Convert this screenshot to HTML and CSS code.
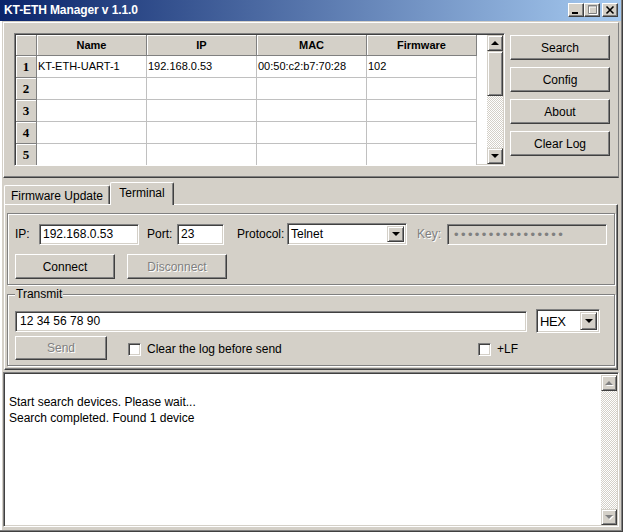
FILE: index.html
```html
<!DOCTYPE html>
<html>
<head>
<meta charset="utf-8">
<title>KT-ETH Manager v 1.1.0</title>
<link rel="stylesheet" href="styles.css">
</head>
<body>
<div class="window">
  <div class="titlebar">
    <span class="title">KT-ETH Manager v 1.1.0</span>
    <div class="caps">
      <div class="cap"><svg width="14" height="12" viewBox="0 0 14 12"><rect x="3" y="8" width="6" height="2" fill="#000"/></svg></div>
      <div class="cap"><svg width="14" height="12" viewBox="0 0 14 12"><path d="M3.5 1.5h8v8h-8z M3 2h9" fill="none" stroke="#fff" stroke-width="1" transform="translate(1 1)"/><path d="M3.5 1.5h8v8h-8z M3 2h9" fill="none" stroke="#808080" stroke-width="1"/></svg></div>
      <div class="cap close"><svg width="14" height="12" viewBox="0 0 14 12"><path d="M3.5 2.5l7 7M10.5 2.5l-7 7" stroke="#000" stroke-width="1.6"/></svg></div>
    </div>
  </div>
  <div class="client">
    <div class="top-panel">
      <div class="grid">
        <div class="cells">
          <div class="hcell"></div>
          <div class="hcell">Name</div>
          <div class="hcell">IP</div>
          <div class="hcell">MAC</div>
          <div class="hcell">Firmware</div>

          <div class="rcell">1</div>
          <div class="cell">KT-ETH-UART-1</div>
          <div class="cell">192.168.0.53</div>
          <div class="cell">00:50:c2:b7:70:28</div>
          <div class="cell">102</div>

          <div class="rcell">2</div>
          <div class="cell"></div><div class="cell"></div><div class="cell"></div><div class="cell"></div>
          <div class="rcell">3</div>
          <div class="cell"></div><div class="cell"></div><div class="cell"></div><div class="cell"></div>
          <div class="rcell">4</div>
          <div class="cell"></div><div class="cell"></div><div class="cell"></div><div class="cell"></div>
          <div class="rcell">5</div>
          <div class="cell"></div><div class="cell"></div><div class="cell"></div><div class="cell"></div>
        </div>
        <div class="filler"></div>
        <div class="vscroll">
          <div class="sbtn"><span class="arrow up"></span></div>
          <div class="thumb"></div>
          <div class="track"></div>
          <div class="sbtn"><span class="arrow down"></span></div>
        </div>
      </div>
      <div class="side-btns">
        <button class="btn side">Search</button>
        <button class="btn side">Config</button>
        <button class="btn side">About</button>
        <button class="btn side">Clear Log</button>
      </div>
    </div>

    <div class="tabs-area">
      <div class="tabstrip">
        <div class="tab fw">Firmware Update</div>
        <div class="tab active">Terminal</div>
      </div>
      <div class="tabpanel">
        <div class="group conn">
          <div class="row r1">
            <span class="lbl w-ip">IP:</span>
            <div class="field w-ipin">192.168.0.53</div>
            <span class="lbl w-port">Port:</span>
            <div class="field w-portin">23</div>
            <span class="lbl w-proto">Protocol:</span>
            <div class="select w-protosel"><span class="sel-text">Telnet</span><span class="drop"><span class="arrow down"></span></span></div>
            <span class="lbl w-key disabled">Key:</span>
            <div class="field w-keyin off"><span class="dots">••••••••••••••••</span></div>
          </div>
          <div class="row r2">
            <button class="btn wide">Connect</button>
            <button class="btn wide disabled gap13">Disconnect</button>
          </div>
        </div>
        <div class="group transmit">
          <span class="legend">Transmit</span>
          <div class="row t1">
            <div class="field w-tx">12 34 56 78 90</div>
            <div class="select w-hex"><span class="sel-text hex">HEX</span><span class="drop"><span class="arrow down"></span></span></div>
          </div>
          <div class="row t2">
            <button class="btn send disabled">Send</button>
            <div class="chk-wrap"><span class="chk"></span><span class="chk-lbl">Clear the log before send</span></div>
            <div class="chk-wrap2"><span class="chk"></span><span class="chk-lbl">+LF</span></div>
          </div>
        </div>
      </div>
    </div>

    <div class="log">
      <div class="log-text">
        <div class="line">&nbsp;</div>
        <div class="line">Start search devices. Please wait...</div>
        <div class="line">Search completed. Found 1 device</div>
      </div>
      <div class="vscroll logscroll">
        <div class="sbtn"><span class="arrow up dis"></span></div>
        <div class="track"></div>
        <div class="sbtn"><span class="arrow down dis"></span></div>
      </div>
    </div>
  </div>
</div>
</body>
</html>
```

FILE: styles.css
```css
* { box-sizing: border-box; }
html, body { margin: 0; padding: 0; }
body {
  font-family: "Liberation Sans", Arial, sans-serif;
  font-size: 12px;
  color: #000;
  background: #d4d0c8;
}
.window {
  width: 623px;
  height: 532px;
  background: #d4d0c8;
  display: flex;
  flex-direction: column;
  overflow: hidden;
  box-shadow: inset -1px -1px #404040, inset -2px -2px #808080, inset 2px 0 #fff;
}

/* Title bar */
.titlebar {
  height: 21px;
  margin-right: 2px;
  background: linear-gradient(to right, #0a246a, #a6caf0);
  display: flex;
  align-items: center;
  justify-content: space-between;
  padding: 0 3px 1px 4px;
  flex: none;
}
.title { color: #fff; font-weight: bold; font-size: 12px; letter-spacing: -0.1px; }
.caps { display: flex; }
.cap {
  width: 16px; height: 14px;
  background: #d4d0c8;
  border: 1px solid;
  border-color: #fff #404040 #404040 #fff;
  box-shadow: inset -1px -1px #808080;
  display: flex;
}
.cap svg { display: block; }
.cap.close { margin-left: 2px; }

/* Client */
.client {
  margin: 1px 4px 0 3px;
  display: flex;
  flex-direction: column;
  flex: none;
}
.top-panel {
  height: 156px;
  border-top: 1px solid #fff;
  border-left: 1px solid #fff;
  border-right: 1px solid #808080;
  border-bottom: 1px solid #404040;
  box-shadow: inset 0 -1px #808080;
  padding: 10px 0 0 10px;
  display: flex;
  align-items: flex-start;
  gap: 5px;
}

/* Grid */
.grid {
  width: 491px;
  height: 133px;
  border: 1px solid;
  border-color: #808080 #fff #fff #808080;
  box-shadow: inset 1px 1px #404040, inset -1px -1px #d4d0c8;
  padding: 1px;
  display: flex;
  background: #fff;
  overflow: hidden;
}
.cells {
  display: grid;
  grid-template-columns: 21px repeat(4, 110px);
  grid-template-rows: 21px repeat(5, 22px);
  width: 461px;
  flex: none;
  align-content: start;
}
.hcell, .rcell {
  background: #d4d0c8;
  border-right: 1px solid #808080;
  border-bottom: 1px solid #808080;
  box-shadow: inset 1px 1px #fff;
  display: flex;
  align-items: center;
  justify-content: center;
}
.hcell { font-weight: bold; font-size: 11px; }
.rcell { font-family: "Liberation Serif", "Times New Roman", serif; font-weight: bold; font-size: 13px; }
.cell {
  background: #fff;
  border-right: 1px solid #c0c0c0;
  border-bottom: 1px solid #c0c0c0;
  font-size: 11px;
  padding: 0 0 2px 1px;
  display: flex;
  align-items: center;
  white-space: nowrap;
  overflow: hidden;
}
.filler { flex: 1; background: #fff; }

/* Scrollbars */
.vscroll {
  width: 16px;
  flex: none;
  display: flex;
  flex-direction: column;
}
.sbtn, .thumb {
  width: 16px;
  background: #d4d0c8;
  border: 1px solid;
  border-color: #d4d0c8 #404040 #404040 #d4d0c8;
  box-shadow: inset 1px 1px #fff, inset -1px -1px #808080;
  flex: none;
}
.sbtn { height: 16px; display: flex; align-items: center; justify-content: center; }
.thumb { height: 45px; }
.track {
  flex: 1;
  background: repeating-conic-gradient(#d4d0c8 0 25%, #fff 0 50%) 0 0 / 2px 2px;
}
.arrow { width: 0; height: 0; border-left: 4px solid transparent; border-right: 4px solid transparent; display: block; }
.arrow.up { border-bottom: 4px solid #000; }
.arrow.down { border-top: 4px solid #000; }
.arrow.up.dis { border-bottom-color: #808080; filter: drop-shadow(1px 1px 0 #fff); }
.arrow.down.dis { border-top-color: #808080; filter: drop-shadow(1px 1px 0 #fff); }

/* Buttons */
.btn {
  font-family: "Liberation Sans", Arial, sans-serif;
  font-size: 12px;
  color: #000;
  background: #d4d0c8;
  border: 1px solid;
  border-color: #fff #404040 #404040 #fff;
  box-shadow: inset -1px -1px #808080;
  padding: 0;
  margin: 0;
  display: flex;
  align-items: center;
  justify-content: center;
}
.btn.disabled { color: #808080; text-shadow: 1px 1px 0 #fff; }
.side-btns {
  margin-top: 2px;
  display: flex;
  flex-direction: column;
  gap: 7px;
}
.side { width: 100px; height: 25px; }

/* Tabs */
.tabs-area { height: 192px; padding-left: 1px; display: flex; flex-direction: column; }
.tabstrip { height: 26px; display: flex; align-items: flex-end; flex: none; }
.tab {
  background: #d4d0c8;
  border-top: 1px solid #fff;
  border-left: 1px solid #fff;
  border-right: 1px solid #404040;
  box-shadow: inset -1px 0 #808080;
  display: flex;
  align-items: center;
  justify-content: center;
  border-top-left-radius: 2px;
  border-top-right-radius: 2px;
}
.tab.fw { width: 106px; height: 19px; padding-top: 1px; }
.tab.active {
  width: 64px;
  height: 23px;
  margin-bottom: -1px;
  padding-bottom: 2px;
  position: relative;
  z-index: 1;
}
.tabpanel {
  width: 614px;
  height: 166px;
  border-top: 1px solid #fff;
  border-left: 1px solid #fff;
  border-right: 1px solid #404040;
  border-bottom: 1px solid #404040;
  box-shadow: inset -1px -1px #808080;
  padding: 8px 0 0 2px;
}

/* Group boxes */
.group {
  width: 608px;
  height: 72px;
  border: 1px solid #808080;
  box-shadow: inset 1px 1px #fff, 1px 1px #fff;
  padding: 0 0 0 7px;
}
.conn { padding-top: 9px; }
.transmit { margin-top: 9px; }
.legend {
  display: block;
  width: max-content;
  margin-top: -8px;
  padding: 0 1px;
  background: #d4d0c8;
  line-height: 14px;
}
.row { display: flex; align-items: center; }
.r1 { height: 22px; }
.r2 { margin-top: 9px; }
.t1 { margin-top: 8px; height: 24px; }
.t2 { margin-top: 3px; }

.lbl { flex: none; }
.lbl.disabled { color: #808080; text-shadow: 1px 1px 0 #fff; }
.w-ip { width: 24px; }
.w-port { width: 30px; margin-left: 8px; }
.w-proto { width: 50px; margin-left: 13px; }
.w-key { width: 30px; margin-left: 10px; }

.field {
  height: 21px;
  background: #fff;
  border: 1px solid;
  border-color: #808080 #fff #fff #808080;
  box-shadow: inset 1px 1px #404040, inset -1px -1px #d4d0c8;
  padding: 0 3px;
  display: flex;
  align-items: center;
  white-space: nowrap;
  flex: none;
}
.field.off { background: #d4d0c8; }
.w-ipin { width: 100px; }
.w-portin { width: 47px; }
.w-keyin { width: 160px; padding-left: 6px; }
.w-tx { width: 512px; padding-left: 4px; }
.dots { color: #808080; font-size: 13px; letter-spacing: 2.4px; line-height: 1; }

.select {
  height: 22px;
  background: #fff;
  border: 1px solid;
  border-color: #808080 #fff #fff #808080;
  box-shadow: inset 1px 1px #404040, inset -1px -1px #d4d0c8;
  padding: 2px;
  display: flex;
  flex: none;
}
.w-protosel { width: 120px; }
.w-hex { width: 64px; height: 24px; margin-left: 9px; }
.sel-text { flex: 1; display: flex; align-items: center; padding-left: 1px; }
.sel-text.hex { font-size: 13px; letter-spacing: -0.4px; }
.drop {
  width: 17px;
  background: #d4d0c8;
  border: 1px solid;
  border-color: #d4d0c8 #404040 #404040 #d4d0c8;
  box-shadow: inset 1px 1px #fff, inset -1px -1px #808080;
  display: flex;
  align-items: center;
  justify-content: center;
}

.wide { width: 100px; height: 25px; }
.gap13 { margin-left: 12px; }
.send { width: 92px; height: 24px; }
.chk-wrap { width: 371px; display: flex; align-items: center; padding-left: 21px; padding-top: 2px; }
.chk-wrap2 { display: flex; align-items: center; padding-top: 2px; }
.chk {
  width: 13px; height: 13px;
  background: #fff;
  border: 1px solid;
  border-color: #808080 #fff #fff #808080;
  box-shadow: inset 1px 1px #404040, inset -1px -1px #d4d0c8;
  flex: none;
}
.chk-lbl { margin-left: 6px; }

/* Log */
.log {
  margin-top: 2px;
  height: 155px;
  background: #fff;
  border: 1px solid;
  border-color: #808080 #fff #fff #808080;
  box-shadow: inset 1px 1px #404040, inset -1px -1px #d4d0c8;
  padding: 1px;
  display: flex;
}
.log-text { flex: 1; padding: 4px 4px; }
.line { line-height: 16px; height: 16px; white-space: nowrap; }
.logscroll { margin-top: 1px; }
```
